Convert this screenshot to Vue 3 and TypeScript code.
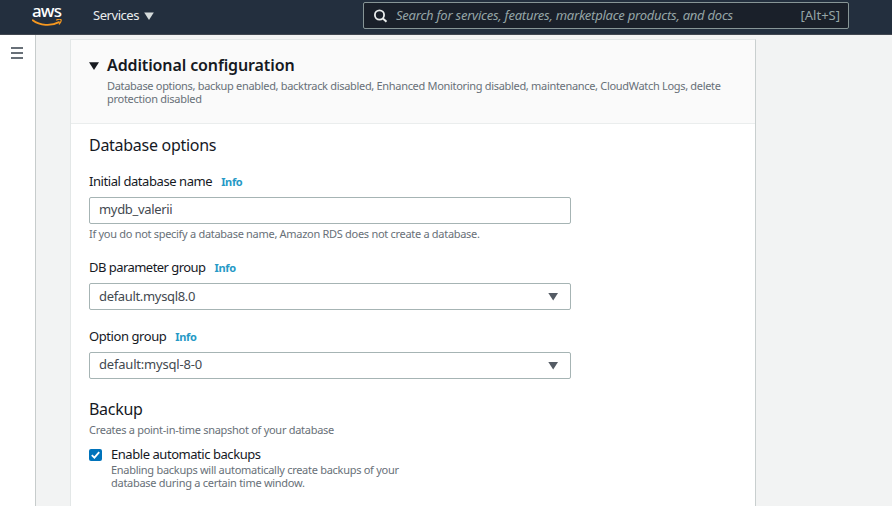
<script setup lang="ts">
import { ref } from 'vue'

const databaseName = ref('mydb_valerii')
const automaticBackups = ref(true)
const selects = [
  { label: 'DB parameter group', value: 'default.mysql8.0', key: 'parameter' },
  { label: 'Option group', value: 'default:mysql-8-0', key: 'option' },
]
</script>

<template>
  <div class="page">
    <header class="topbar">
      <div class="logo">
        <span class="logo-text">aws</span>
        <svg class="smile" width="31" height="9" viewBox="0 0 31 9">
          <path d="M.7 1.2C8 6.6 19 7.4 27 3.1" fill="none" stroke="#f7981f" stroke-width="1.8" stroke-linecap="round" />
          <path d="M24.5 1c2-.9 4.200-.9 4.500-.3.3.7-.4 3-1.700 4.300" fill="none" stroke="#f7981f" stroke-width="1.200" stroke-linecap="round" />
        </svg>
      </div>
      <button class="services"><span>Services</span><svg width="10" height="8" viewBox="0 0 10 8"><path d="M.2.5h9.600L5 8z" fill="#d5dbdb" /></svg></button>
      <div class="search">
        <svg width="14" height="14" viewBox="0 0 14 14" fill="none" stroke="#eaeded" stroke-width="1.800"><circle cx="5.500" cy="6" r="4.600" /><path d="M8.900 9.400l3.600 3.300" stroke-width="2" /></svg>
        <span class="placeholder">Search for services, features, marketplace products, and docs</span>
        <span class="shortcut">[Alt+S]</span>
      </div>
    </header>
    <div class="body">
      <aside class="rail"><i /><i /><i /></aside>
      <main class="panel">
        <section class="panel-head">
          <svg class="caret" width="10" height="8" viewBox="0 0 10 8"><path d="M0 .3h10L5 8z" fill="#16191f" /></svg>
          <div>
            <h1>Additional configuration</h1>
            <p class="small summary"><span class="s1">Database options, backup enabled, backtrack disabled, Enhanced Monitoring disabled, maintenance, CloudWatch Logs, delete</span><span class="s2">protection disabled</span></p>
          </div>
        </section>
        <section class="content">
          <h2 class="options-title">Database options</h2>
          <div class="field name-field">
            <div class="label"><span class="label-text">Initial database name</span><a>Info</a></div>
            <div class="control"><span class="value">{{ databaseName }}</span></div>
            <p class="small hint">If you do not specify a database name, Amazon RDS does not create a database.</p>
          </div>
          <div v-for="item in selects" :key="item.key" class="field" :class="item.key">
            <div class="label"><span class="label-text">{{ item.label }}</span><a>Info</a></div>
            <div class="control">
              <span class="value">{{ item.value }}</span>
              <svg width="10" height="8" viewBox="0 0 10 8"><path d="M.3 0h9.700L5.200 7.600z" fill="#545b64" /></svg>
            </div>
          </div>
          <h2 class="backup-title">Backup</h2>
          <p class="small backup-text">Creates a point-in-time snapshot of your database</p>
          <div class="check-row">
            <button class="checkbox" role="checkbox" :aria-checked="automaticBackups" @click="automaticBackups = !automaticBackups">
              <svg v-if="automaticBackups" width="13" height="12" viewBox="0 0 13 12"><path d="M2.800 6.200l2.600 2.500 4.800-5.600" fill="none" stroke="#fff" stroke-width="1.800" /></svg>
            </button>
            <div>
              <div class="check-label">Enable automatic backups</div>
              <p class="small check-text"><span class="c1">Enabling backups will automatically create backups of your</span><span class="c2">database during a certain time window.</span></p>
            </div>
          </div>
        </section>
      </main>
    </div>
  </div>
</template>

<style>
body { margin: 0; overflow: hidden; }
</style>

<style scoped>
* { box-sizing: border-box; }
.page { width: 892px; height: 506px; overflow: hidden; display: flex; flex-direction: column; background: #f2f3f3; color: #16191f; font-family: "Noto Sans", "Open Sans", sans-serif; font-size: 13px; white-space: nowrap; }
h1, h2, p { margin: 0; }
button { border: 0; padding: 0; background: none; font: inherit; color: inherit; }
svg { display: block; flex: none; }
.topbar { flex: none; height: 35px; display: flex; align-items: flex-start; background: #232f3e; border-bottom: 1px solid #414750; }
.logo { width: 31px; margin-left: 32px; padding-top: 4px; }
.logo-text { display: block; height: 14px; line-height: 14px; font-size: 17px; font-weight: 500; color: #fff; letter-spacing: -.9px; }
.smile { margin-top: 1px; }
.services { margin: 5px 0 0 30px; height: 20px; display: flex; align-items: center; gap: 6px; color: #eaeded; font-size: 13px; letter-spacing: -.45px; }
.services span { width: 45px; line-height: 18px; }
.services svg { margin-top: 2px; }
.search { width: 486px; height: 27px; margin: 2px 0 0 209px; padding: 0 8px 0 10px; border: 1px solid #879596; border-radius: 2px; background: #1a202a; display: flex; align-items: center; color: #95a5a6; font-size: 13px; line-height: 18px; }
.placeholder { margin: 0 0 2px 8px; font-style: italic; letter-spacing: -.24px; }
.shortcut { margin: 0 0 2px auto; letter-spacing: 0; }
.body { flex: 1; display: flex; min-height: 0; }
.rail { width: 36px; background: #fff; border-right: 1px solid #c7cccc; padding: 12px 0 0 11px; display: flex; flex-direction: column; gap: 3px; }
.rail i { width: 12px; height: 2px; background: #687078; }
.panel { width: 686px; margin: 4px 0 0 34px; border: 1px solid #e3e7e7; border-right-color: #c9cfcf; border-bottom: 0; background: #fff; }
.panel-head { height: 84px; padding: 15px 0 0 18px; border-bottom: 1px solid #eaeded; background: #fafafa; display: flex; gap: 8px; }
.caret { margin-top: 7px; }
h1 { font-size: 16px; line-height: 20px; font-weight: 600; letter-spacing: -.12px; }
.small { font-size: 11px; line-height: 13px; color: #687078; letter-spacing: -.28px; }
.small span { display: block; }
.summary { margin-top: 4px; }
.s1 { letter-spacing: -.313px; }
.content { padding: 10px 0 0 18px; }
h2 { font-size: 16px; line-height: 22px; font-weight: 400; letter-spacing: -.28px; }
.field { width: 482px; }
.name-field { margin-top: 15px; }
.label { height: 20px; line-height: 20px; display: flex; align-items: center; gap: 9px; letter-spacing: -.43px; }
.label a { margin-top: 2px; font-size: 11px; font-weight: 700; color: #2699c6; letter-spacing: -.35px; }
.control { height: 27px; margin-top: 6px; padding: 0 12px 0 9px; border: 1px solid #a6b4b4; border-radius: 2px; display: flex; align-items: center; justify-content: space-between; color: #434950; line-height: 18px; letter-spacing: -.33px; }
.value { margin-bottom: 2px; }
.name-field .value, .option .value { margin-bottom: 3px; }
.hint { margin-top: 3px; letter-spacing: -.295px; }
.parameter { margin-top: 17px; }
.parameter .label { letter-spacing: -.54px; }
.option { margin-top: 16px; }
.option .value { letter-spacing: -.2px; }
.backup-title { margin-top: 19px; }
.backup-text { margin-top: 3px; }
.check-row { display: flex; gap: 9px; margin-top: 9px; }
.checkbox { width: 13px; height: 12px; margin-top: 4px; border-radius: 2px; background: #0073bb; }
.check-label { line-height: 18px; letter-spacing: -.45px; }
</style>
